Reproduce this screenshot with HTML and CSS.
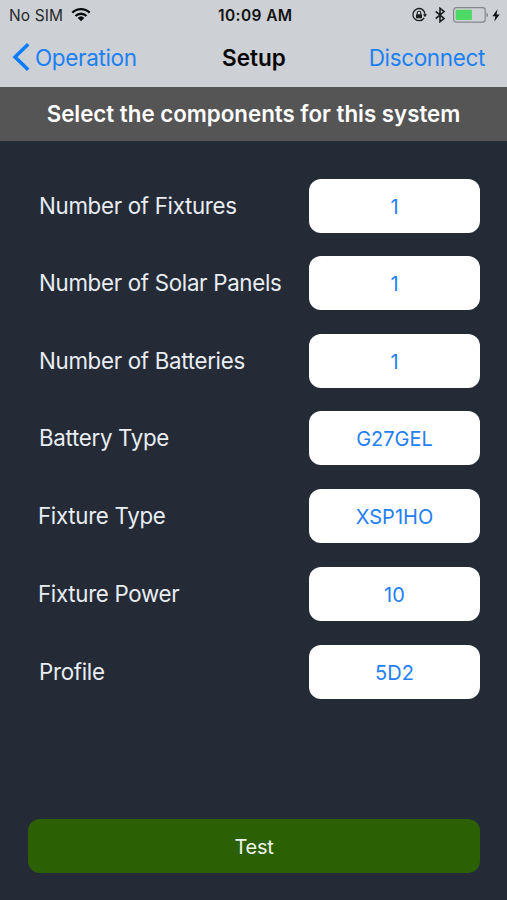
FILE: index.html
```html
<!DOCTYPE html>
<html lang="en">
<head>
    <meta charset="UTF-8">
    <meta name="viewport" content="width=device-width, initial-scale=1.0">
    <title>Setup</title>
    <link rel="stylesheet" href="styles.css">
</head>
<body>
    <header class="top">
        <div class="status-bar">
            <div class="status-left">
                <span class="carrier">No SIM</span>
                <svg class="wifi" width="20" height="15" viewBox="0 0 20 15">
                    <g fill="none" stroke="#0b0c0e" stroke-width="2.3">
                        <path d="M1.3 5.6a12.4 12.4 0 0 1 17.4 0"/>
                        <path d="M4.5 9a7.9 7.9 0 0 1 11 0"/>
                    </g>
                    <path d="M10 14.3L6.7 10.9a4.8 4.8 0 0 1 6.6 0z" fill="#0b0c0e"/>
                </svg>
            </div>
            <span class="time">10:09 AM</span>
            <div class="status-right">
                <svg width="16" height="16" viewBox="0 0 16 16">
                    <path d="M13.2 10.8a6.1 6.1 0 1 1 .9-3.2" fill="none" stroke="#1b1c1e" stroke-width="1.3"/>
                    <path d="M11.9 7.3h4.1l-2 3z" fill="#1b1c1e"/>
                    <rect x="5" y="7.2" width="6" height="4.1" rx=".5" fill="#1b1c1e"/>
                    <path d="M6.2 7.4V6a1.8 1.8 0 0 1 3.6 0v1.4" fill="none" stroke="#1b1c1e" stroke-width="1.1"/>
                </svg>
                <svg class="bluetooth" width="10" height="16" viewBox="0 0 10 16">
                    <path d="M.7 4.4l8.3 7.1-4 3.2V1.3l4 3.2-8.3 7.1" fill="none" stroke="#1b1c1e" stroke-width="1.6"/>
                </svg>
                <svg class="battery" width="36" height="16" viewBox="0 0 36 16">
                    <rect x=".6" y=".6" width="31.6" height="14.6" rx="2.6" fill="none" stroke="#85888b" stroke-width="1.2"/>
                    <rect x="2.7" y="2.7" width="16.2" height="10.4" rx=".6" fill="#4cd964"/>
                    <path d="M33.6 5.4q2.6 2.5 0 5z" fill="#707376"/>
                </svg>
                <svg class="bolt" width="8" height="13" viewBox="0 0 8 13">
                    <path d="M5.5.3L.4 7.2h3L2.3 12.6l5.3-7.1H4.5z" fill="#0b0c0e"/>
                </svg>
            </div>
        </div>
        <nav class="nav-bar">
            <a class="back">
                <svg width="18" height="30" viewBox="0 0 18 30">
                    <path d="M16.2 2.2L3 15l13.2 12.8" fill="none" stroke="#087cfb" stroke-width="3.5"/>
                </svg>
                <span>Operation</span>
            </a>
            <h1>Setup</h1>
            <a class="disconnect">Disconnect</a>
        </nav>
    </header>

    <h2 class="banner">Select the components for this system</h2>

    <main class="setup">
        <div class="fields">
            <div class="field"><label>Number of Fixtures</label><button class="value">1</button></div>
            <div class="field"><label>Number of Solar Panels</label><button class="value">1</button></div>
            <div class="field"><label>Number of Batteries</label><button class="value">1</button></div>
            <div class="field"><label>Battery Type</label><button class="value">G27GEL</button></div>
            <div class="field"><label class="outdent">Fixture Type</label><button class="value">XSP1HO</button></div>
            <div class="field"><label class="outdent">Fixture Power</label><button class="value">10</button></div>
            <div class="field"><label>Profile</label><button class="value">5D2</button></div>
        </div>
        <button class="test">Test</button>
    </main>
</body>
</html>
```

FILE: styles.css
```css
* {
    box-sizing: border-box;
}
body {
    margin: 0;
    height: 900px;
    display: flex;
    flex-direction: column;
    background-color: #242b36;
    font-family: Inter, "Liberation Sans", sans-serif;
    overflow: hidden;
}
.top {
    height: 87px;
    background-color: #cdd0d4;
}
.status-bar {
    height: 30px;
    padding: 0 7px 0 9px;
    display: grid;
    grid-template-columns: 209px auto 1fr;
    align-items: center;
    font-size: 15.5px;
}
.status-left,
.status-right {
    display: flex;
    align-items: center;
}
.status-right {
    justify-content: flex-end;
}
.carrier {
    color: #26282b;
    letter-spacing: 0.1px;
}
.wifi {
    margin: -2px 0 0 8px;
}
.time {
    font-weight: 600;
    color: #111;
    letter-spacing: 0.4px;
}
.bluetooth {
    margin-left: 8px;
}
.battery {
    margin-left: 8px;
}
.bolt {
    margin-left: 3px;
}
.nav-bar {
    height: 57px;
    padding: 0 22px 3px 12px;
    display: grid;
    grid-template-columns: 210px auto 1fr;
    align-items: center;
    font-size: 22.5px;
    letter-spacing: -0.35px;
}
.nav-bar h1 {
    margin: 0;
    font-size: 22.5px;
    font-weight: 600;
    letter-spacing: 0;
    color: #050505;
}
.back {
    display: flex;
    align-items: center;
    gap: 5px;
    color: #1c80f5;
}
.disconnect {
    text-align: right;
    color: #1c80f5;
}
.banner {
    margin: 0;
    height: 54px;
    line-height: 54px;
    background-color: #555;
    color: #fff;
    font-size: 22.3px;
    font-weight: 600;
    text-align: center;
}
.setup {
    flex: 1;
    padding: 38px 27px 27px 28px;
    display: flex;
    flex-direction: column;
    justify-content: space-between;
}
.fields {
    display: grid;
    grid-template-rows: 77px 78px 77px 78px 78px 78px 54px;
}
.field {
    height: 54px;
    padding-left: 11px;
    display: flex;
    align-items: center;
    justify-content: space-between;
}
.field label {
    padding-bottom: 1px;
    font-size: 22.3px;
    letter-spacing: -0.3px;
    color: #e9edf3;
    white-space: nowrap;
}
.field .outdent {
    margin-left: -1px;
}
.value,
.test {
    height: 54px;
    padding: 1px 0 0;
    border: none;
    border-radius: 12px;
    font-family: inherit;
    font-size: 20px;
}
.value {
    width: 171px;
    background-color: #fff;
    color: #2480f2;
}
.test {
    padding-top: 2px;
    background-color: #2b6104;
    color: #eef5ea;
    letter-spacing: -0.3px;
}
```
